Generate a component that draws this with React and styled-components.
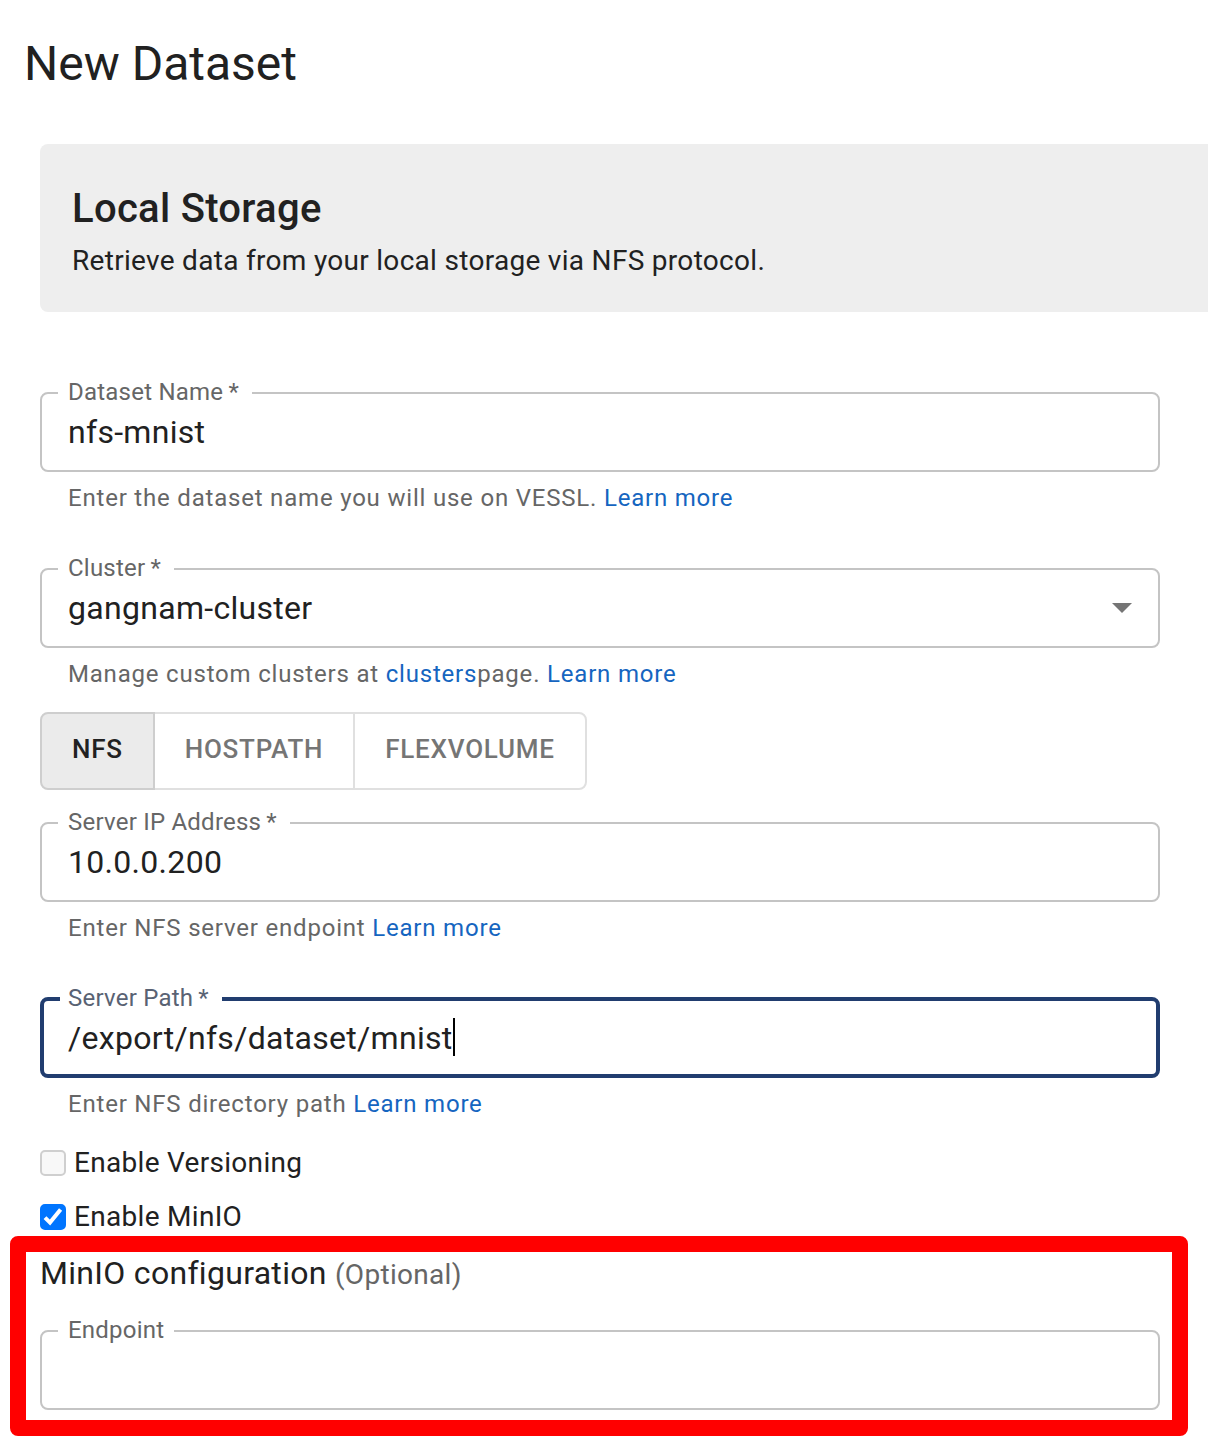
import React, { useState } from "react";
import styled, { createGlobalStyle, css } from "styled-components";

const color = {
  text: "#212121",
  muted: "#666666",
  outline: "#c4c4c4",
  focus: "#213d6f",
  focusLabel: "#596273",
  link: "#1565c0",
  panel: "#eeeeee",
  divider: "#e0e0e0",
};

/* Material type scale, tracking included */
const type = {
  headline: css`
    font-size: 48px;
    line-height: 64px;
    font-weight: 400;
  `,
  title: css`
    font-size: 40px;
    line-height: 64px;
    font-weight: 500;
    letter-spacing: 0.0075em;
  `,
  body1: css`
    font-size: 32px;
    line-height: 40px;
    font-weight: 400;
    letter-spacing: 0.00938em;
  `,
  body2: css`
    font-size: 28px;
    line-height: 40px;
    font-weight: 400;
    letter-spacing: 0.01071em;
  `,
  label: css`
    font-size: 24px;
    line-height: 24px;
    letter-spacing: 0.00938em;
  `,
  caption: css`
    font-size: 24px;
    line-height: 40px;
    letter-spacing: 0.03333em;
  `,
  button: css`
    font-size: 26px;
    line-height: 40px;
    font-weight: 500;
    letter-spacing: 0.02857em;
  `,
};

const GlobalStyle = createGlobalStyle`
  *, *::before, *::after { box-sizing: border-box; }
  body {
    margin: 0;
    background: #ffffff;
    color: ${color.text};
    font-family: Roboto, "Liberation Sans", sans-serif;
  }
`;

const Page = styled.main`
  display: flex;
  flex-direction: column;
  padding: 32px 0 4px;
`;

const PageTitle = styled.h1`
  ${type.headline}
  margin: 0 24px 48px;
`;

const Banner = styled.section`
  margin-left: 40px;
  padding: 33px 32px 31px;
  background: ${color.panel};
  border-radius: 8px 0 0 8px;
`;

const BannerTitle = styled.h2`
  ${type.title}
  margin: 0;
`;

const BannerText = styled.p`
  ${type.body2}
  margin: 0;
`;

const Form = styled.form`
  display: flex;
  flex-direction: column;
  padding-top: 68px;
`;

const Fields = styled.div`
  display: flex;
  flex-direction: column;
  gap: 38px;
  margin: 0 48px 0 40px;
`;

const Outline = styled.fieldset`
  min-width: 0;
  margin: 0;
  padding: 0 16px;
  border: ${(p) => (p.$focused ? `4px solid ${color.focus}` : `2px solid ${color.outline}`)};
  border-radius: 8px;
`;

const Notch = styled.legend`
  ${type.label}
  padding: 0 ${(p) => (p.$required ? 13 : 10)}px 2px ${(p) => (p.$focused ? 8 : 10)}px;
  color: ${(p) => (p.$focused ? color.focusLabel : color.muted)};
`;

const ControlRow = styled.div`
  display: flex;
  height: ${(p) => (p.$focused ? 62 : 64)}px;
  padding: 6px ${(p) => (p.$focused ? 8 : 10)}px 0;
`;

const controlText = css`
  ${type.body1}
  height: 40px;
  padding: 0;
  border: 0;
  outline: 0;
  background: transparent;
  color: ${color.text};
  font-family: inherit;
`;

const TextInput = styled.input`
  ${controlText}
  ${(p) =>
    p.$focused
      ? css`
          field-sizing: content;
          caret-color: transparent;
        `
      : css`
          flex: 1;
          min-width: 0;
        `}
`;

const Caret = styled.span`
  width: 2px;
  height: 38px;
  background: #000000;
`;

const SelectStack = styled.div`
  flex: 1;
  display: grid;
  align-items: center;
  height: 40px;
  > * {
    grid-area: 1 / 1;
  }
`;

const Select = styled.select`
  ${controlText}
  appearance: none;
  width: 100%;
`;

const Arrow = styled.svg`
  justify-self: end;
  width: 20px;
  height: 10px;
  fill: #757575;
  pointer-events: none;
`;

const Helper = styled.p`
  ${type.caption}
  margin: 6px 28px 0;
  color: ${color.muted};
`;

const Link = styled.a`
  color: ${color.link};
  text-decoration: none;
`;

const ToggleGroup = styled.div`
  display: flex;
  margin: 18px 40px 20px;
`;

const Toggle = styled.button`
  ${type.button}
  height: 78px;
  padding: 0 30px 4px;
  border: 2px solid ${(p) => (p.$selected ? "#cecece" : color.divider)};
  background: ${(p) => (p.$selected ? "#ebebeb" : "transparent")};
  color: ${(p) => (p.$selected ? color.text : "#757575")};
  font-family: inherit;
  text-transform: uppercase;
  & + & {
    margin-left: -2px;
  }
  &:first-child {
    border-radius: 8px 0 0 8px;
  }
  &:last-child {
    border-radius: 0 8px 8px 0;
  }
  ${(p) => p.$selected && "z-index: 1;"}
`;

const CheckList = styled.div`
  display: flex;
  flex-direction: column;
  gap: 16px;
  margin: 20px 40px 0;
`;

const CheckRow = styled.label`
  ${type.body2}
  display: flex;
  align-items: center;
  gap: 8px;
  height: 38px;
`;

const CheckStack = styled.span`
  display: grid;
  > * {
    grid-area: 1 / 1;
  }
`;

const CheckInput = styled.input`
  appearance: none;
  width: 26px;
  height: 26px;
  margin: 0;
  border: 2px solid #cfcfcf;
  border-radius: 5px;
  background: #f8f8f8;
  &:checked {
    border-color: #0075ff;
    background: #0075ff;
  }
`;

const CheckMark = styled.svg`
  width: 26px;
  height: 26px;
  fill: none;
  stroke: #ffffff;
  stroke-width: 4;
  pointer-events: none;
`;

const Highlight = styled.section`
  margin: 0 20px 0 10px;
  padding: 0 12px 10px 14px;
  border: 16px solid #ff0000;
  border-radius: 8px;
`;

const ConfigTitle = styled.h3`
  ${type.body1}
  line-height: 42px;
  margin: 0 0 24px;
`;

const Optional = styled.small`
  ${type.body2}
  line-height: 28px;
  color: ${color.muted};
`;

function Field({ id, label, required, focused, helper, children }) {
  return (
    <div>
      <Outline $focused={focused}>
        <Notch $focused={focused} $required={required}>
          <label htmlFor={id}>
            {label}
            {required && "\u2009*"}
          </label>
        </Notch>
        <ControlRow $focused={focused}>{children}</ControlRow>
      </Outline>
      {helper && <Helper>{helper}</Helper>}
    </div>
  );
}

function TextField({ id, value, focused, ...rest }) {
  return (
    <Field id={id} focused={focused} {...rest}>
      <TextInput id={id} type="text" defaultValue={value} $focused={focused} />
      {focused && <Caret />}
    </Field>
  );
}

function CheckOption({ label, initial }) {
  const [checked, setChecked] = useState(initial);
  return (
    <CheckRow>
      <CheckStack>
        <CheckInput
          type="checkbox"
          checked={checked}
          onChange={(e) => setChecked(e.target.checked)}
        />
        {checked && (
          <CheckMark viewBox="0 0 26 26" aria-hidden="true">
            <path d="M5 13.6 L10 18.6 L20.6 5.4" />
          </CheckMark>
        )}
      </CheckStack>
      {label}
    </CheckRow>
  );
}

const learnMore = <Link href="#docs">Learn more</Link>;
const volumeTypes = ["NFS", "HostPath", "FlexVolume"];

export default function App() {
  const [volume, setVolume] = useState("NFS");
  return (
    <Page>
      <GlobalStyle />
      <PageTitle>New Dataset</PageTitle>
      <Banner>
        <BannerTitle>Local Storage</BannerTitle>
        <BannerText>Retrieve data from your local storage via NFS protocol.</BannerText>
      </Banner>
      <Form>
        <Fields>
          <TextField
            id="dataset-name"
            label="Dataset Name"
            required
            value="nfs-mnist"
            helper={<>Enter the dataset name you will use on VESSL. {learnMore}</>}
          />
          <Field
            id="cluster"
            label="Cluster"
            required
            helper={
              <>
                Manage custom clusters at <Link href="#clusters">clusters</Link>page. {learnMore}
              </>
            }
          >
            <SelectStack>
              <Select id="cluster" defaultValue="gangnam-cluster">
                <option>gangnam-cluster</option>
              </Select>
              <Arrow viewBox="0 0 20 10" aria-hidden="true">
                <path d="M0 0h20L10 10z" />
              </Arrow>
            </SelectStack>
          </Field>
        </Fields>
        <ToggleGroup role="group" aria-label="Volume type">
          {volumeTypes.map((name) => (
            <Toggle
              key={name}
              type="button"
              $selected={name === volume}
              aria-pressed={name === volume}
              onClick={() => setVolume(name)}
            >
              {name}
            </Toggle>
          ))}
        </ToggleGroup>
        <Fields>
          <TextField
            id="server-ip"
            label="Server IP Address"
            required
            value="10.0.0.200"
            helper={<>Enter NFS server endpoint {learnMore}</>}
          />
          <TextField
            id="server-path"
            label="Server Path"
            required
            focused
            value="/export/nfs/dataset/mnist"
            helper={<>Enter NFS directory path {learnMore}</>}
          />
        </Fields>
        <CheckList>
          <CheckOption label="Enable Versioning" initial={false} />
          <CheckOption label="Enable MinIO" initial />
        </CheckList>
        <Highlight>
          <ConfigTitle>
            MinIO configuration <Optional>(Optional)</Optional>
          </ConfigTitle>
          <TextField id="endpoint" label="Endpoint" value="" />
        </Highlight>
      </Form>
    </Page>
  );
}
